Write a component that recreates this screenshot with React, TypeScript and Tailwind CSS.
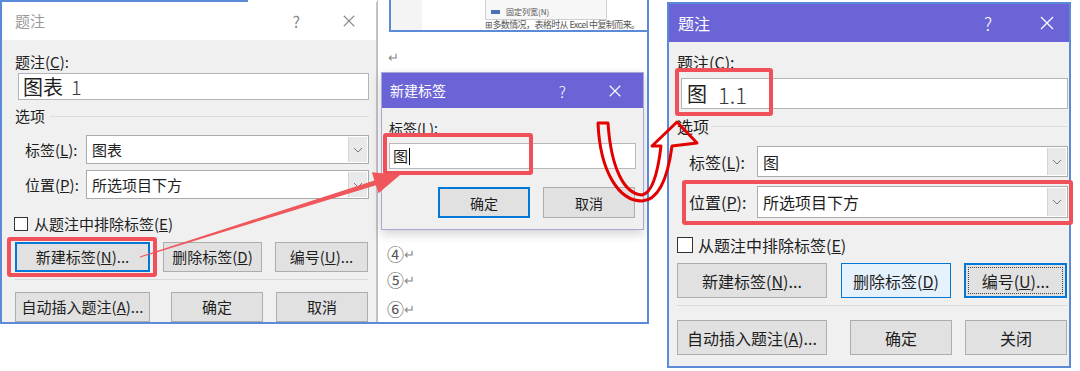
import React from "react";

const cjk = "font-['Noto_Sans_CJK_SC',sans-serif]";

function CloseIcon({ size = 16, color = "#ffffff" }: { size?: number; color?: string }) {
  return (
    <svg width={size} height={size} viewBox="0 0 16 16">
      <path d="M2 2 L14 14 M14 2 L2 14" stroke={color} strokeWidth="1.3" />
    </svg>
  );
}

function Chevron() {
  return (
    <svg width="10" height="6" viewBox="0 0 10 6">
      <path d="M1 1 L5 5 L9 1" fill="none" stroke="#777" strokeWidth="1" />
    </svg>
  );
}

function Select({ text, className }: { text: string; className: string }) {
  return (
    <div className={`flex items-stretch border border-[#ababab] bg-white ${className}`}>
      <div className="flex flex-1 items-center pl-[5px]">{text}</div>
      <div className="m-px flex w-[19px] items-center justify-center border-l border-[#d4d4d4] bg-[#e9e9e9]">
        <Chevron />
      </div>
    </div>
  );
}

const btnStyles = {
  normal: "border border-[#adadad] bg-[#e1e1e1]",
  focus: "border-2 border-[#0078d7] bg-[#e1e1e1]",
  hover: "border border-[#0078d7] bg-[#e5f1fb]",
};

function Btn({
  children,
  className,
  variant = "normal",
}: {
  children: React.ReactNode;
  className: string;
  variant?: "normal" | "focus" | "hover";
}) {
  return (
    <div className={`flex shrink-0 items-center justify-center ${btnStyles[variant]} ${className}`}>
      {children}
    </div>
  );
}

function LeftDialog() {
  return (
    <div className="flex w-[375px] shrink-0 flex-col">
      <div className="h-[2px] w-[246px] shrink-0 bg-[#5b8bd8]" />
      <div className="flex flex-1 flex-col border-r border-[#c4c4c4]">
        <div className="flex h-[38px] shrink-0 items-center bg-white pl-[13px] pr-[20px]">
          <span className="text-[15px] text-[#9a9a9a]">题注</span>
          <span className="ml-auto text-[16px] text-[#8a8a8a]">?</span>
          <span className="ml-[42px] flex">
            <CloseIcon size={14} color="#8a8a8a" />
          </span>
        </div>
        <div className="flex-1 bg-[#f0f0f0] pl-[13px] pt-[12px] text-[15px] leading-[20px] text-[#1e1e1e]">
          <div className="h-[20px]">
            题注(<u>C</u>):
          </div>
          <div className="ml-[3px] mt-[1px] flex h-[27px] w-[351px] items-center border border-[#b4b4b4] bg-white pl-[4px] text-[20px] leading-[24px]">
            <span>图表</span>
            <span className="ml-[8px] font-light text-[#3a3a3a]">1</span>
          </div>
          <div className="mt-[6px] flex h-[20px] w-[354px] items-center">
            <span>选项</span>
            <div className="ml-[5px] h-px flex-1 bg-[#dcdcdc]" />
          </div>
          <div className="mt-[9px] flex items-center">
            <span className="w-[71px] pl-[10px]">
              标签(<u>L</u>):
            </span>
            <Select text="图表" className="h-[29px] w-[283px]" />
          </div>
          <div className="mt-[6px] flex items-center">
            <span className="w-[71px] pl-[10px]">
              位置(<u>P</u>):
            </span>
            <Select text="所选项目下方" className="h-[29px] w-[283px]" />
          </div>
          <div className="-ml-px mt-[18px] flex h-[14px] items-center">
            <div className="h-[14px] w-[14px] border border-[#333] bg-white" />
            <span className="ml-[6px]">
              从题注中排除标签(<u>E</u>)
            </span>
          </div>
          <div className="mt-[11px] flex">
            <Btn variant="focus" className="h-[30px] w-[135px]">
              新建标签(<u>N</u>)...
            </Btn>
            <Btn className="ml-[13px] h-[30px] w-[99px]">
              删除标签(<u>D</u>)
            </Btn>
            <Btn className="ml-[13px] h-[30px] w-[93px]">
              编号(<u>U</u>)...
            </Btn>
          </div>
          <div className="mt-[7px] h-px w-[353px] bg-[#dadada]" />
          <div className="mt-[12px] flex">
            <Btn className="h-[30px] w-[135px]">
              自动插入题注(<u>A</u>)...
            </Btn>
            <Btn className="ml-[21px] h-[30px] w-[92px]">确定</Btn>
            <Btn className="ml-[13px] h-[30px] w-[92px]">取消</Btn>
          </div>
        </div>
      </div>
    </div>
  );
}

function NewLabelDialog() {
  return (
    <div className="ml-[3px] mt-[7px] flex w-[263px] shrink-0 flex-col border border-[#aaa6d6] shadow-[0_4px_10px_rgba(0,0,0,0.18)]">
      <div className="flex h-[35px] items-center bg-[#6b64d6] pl-[8px] pr-[21px] text-white">
        <span className="text-[14px]">新建标签</span>
        <span className="ml-auto text-[16px] font-light">?</span>
        <span className="ml-[42px] flex">
          <CloseIcon size={14} />
        </span>
      </div>
      <div className="bg-[#f0f0f0] pb-[11px] pl-[7px] pt-[11px] text-[14px] leading-[18px] text-[#1e1e1e]">
        <div>
          标签(<u>L</u>):
        </div>
        <div className="mt-[6px] flex h-[26px] w-[247px] items-center border border-[#b9b9b9] bg-white pl-[3px] text-[15px]">
          <span>图</span>
          <span className="ml-px h-[17px] w-px bg-black" />
        </div>
        <div className="mt-[18px] flex">
          <Btn variant="focus" className="ml-[49px] h-[31px] w-[92px]">
            确定
          </Btn>
          <Btn className="ml-[13px] h-[31px] w-[92px]">取消</Btn>
        </div>
      </div>
    </div>
  );
}

function DocumentArea() {
  return (
    <div className="flex flex-1 flex-col border-l border-[#c0c0c0] bg-white">
      <div className="relative ml-[11px] flex h-[32px] shrink-0 border-b-2 border-l-2 border-[#5b8bd8]">
        <div className="w-[31px] bg-[#f4f4f4]" />
        <div className="absolute left-[94px] top-[-2px] flex h-[22px] w-[122px] items-end border border-[#cfcfcf] bg-[#f7f7f7] pb-[2px] pl-[5px] text-[8px] leading-[10px] text-[#555]">
          <span className="mb-[3px] h-[4px] w-[9px] bg-[#4f6fb5]" />
          <span className="ml-[6px]">固定列宽(N)</span>
        </div>
        <div className="absolute bottom-0 left-[94px] whitespace-nowrap text-[9px] leading-[10px] tracking-[-0.6px] text-[#555]">
          ⊞多数情况，表格时从 Excel 中复制而来。
        </div>
      </div>
      <div className="ml-[10px] mt-[17px] h-[16px] shrink-0 text-[13px] leading-[16px] text-[#888]">↵</div>
      <NewLabelDialog />
      <div className="ml-[9px] shrink-0 text-[17px] leading-[20px] text-[#555]">
        <div className="mt-[14px] flex h-[20px] items-center">
          ④<span className="text-[13px] text-[#888]">↵</span>
        </div>
        <div className="mt-[6px] flex h-[20px] items-center">
          ⑤<span className="text-[13px] text-[#888]">↵</span>
        </div>
        <div className="mt-[9px] flex h-[20px] items-center">
          ⑥<span className="text-[13px] text-[#888]">↵</span>
        </div>
      </div>
    </div>
  );
}

function RightDialog() {
  return (
    <div className="ml-[18px] mt-[2px] flex h-[366px] w-[404px] shrink-0 flex-col border-2 border-[#5b8bd8]">
      <div className="flex h-[38px] shrink-0 items-center bg-[#6b64d6] pl-[9px] pr-[14px] text-white">
        <span className="text-[16px]">题注</span>
        <span className="ml-auto text-[18px] font-light">?</span>
        <span className="ml-[47px] flex">
          <CloseIcon size={16} />
        </span>
      </div>
      <div className="flex-1 bg-[#f0f0f0] pl-[8px] pt-[10px] text-[16px] leading-[20px] text-[#1e1e1e]">
        <div className="h-[20px]">
          题注(<u>C</u>):
        </div>
        <div className="ml-[4px] mt-[6px] flex h-[31px] w-[387px] items-center border border-[#b4b4b4] bg-white pl-[5px] text-[20px] leading-[24px]">
          <span>图</span>
          <span className="ml-[11px] text-[22px] font-light text-[#3a3a3a]">1.1</span>
        </div>
        <div className="mt-[7px] flex h-[20px] w-[391px] items-center">
          <span>选项</span>
          <div className="ml-[2px] h-px flex-1 bg-[#dcdcdc]" />
        </div>
        <div className="mt-[10px] flex items-center">
          <span className="w-[80px] pl-[12px]">
            标签(<u>L</u>):
          </span>
          <Select text="图" className="h-[31px] w-[311px]" />
        </div>
        <div className="mt-[9px] flex items-center">
          <span className="w-[80px] pl-[12px]">
            位置(<u>P</u>):
          </span>
          <Select text="所选项目下方" className="h-[32px] w-[311px]" />
        </div>
        <div className="mt-[19px] flex h-[16px] items-center">
          <div className="h-[16px] w-[16px] border border-[#333] bg-white" />
          <span className="ml-[5px]">
            从题注中排除标签(<u>E</u>)
          </span>
        </div>
        <div className="mt-[10px] flex">
          <Btn className="h-[35px] w-[150px]">
            新建标签(<u>N</u>)...
          </Btn>
          <Btn variant="hover" className="ml-[14px] h-[35px] w-[110px]">
            删除标签(<u>D</u>)
          </Btn>
          <Btn variant="focus" className="ml-[13px] h-[35px] w-[103px] p-[2px]">
            <div className="flex h-full w-full items-center justify-center border border-dotted border-[#444]">
              编号(<u>U</u>)...
            </div>
          </Btn>
        </div>
        <div className="mt-[7px] h-px w-[390px] bg-[#dadada]" />
        <div className="mt-[14px] flex">
          <Btn className="h-[35px] w-[150px]">
            自动插入题注(<u>A</u>)...
          </Btn>
          <Btn className="ml-[23px] h-[35px] w-[102px]">确定</Btn>
          <Btn className="ml-[13px] h-[35px] w-[102px]">关闭</Btn>
        </div>
      </div>
    </div>
  );
}

function Arrows() {
  return (
    <svg className="pointer-events-none absolute left-0 top-0" width="1080" height="371" viewBox="0 0 1080 371">
      <polygon
        points="140.2,257.5 139.8,256.5 374.4,180.4 371.9,172.3 400,175 378.5,193.3 376,185.2"
        fill="#f0575c"
      />
      <path
        d="M598 123 L608 123 C611 168 624 194 642 195 C652 193 658 172 661 146 L652 146 L677 122 L697 143 L672 146 C668 176 660 200 642 201 C619 201 600 172 598 123 Z"
        fill="none"
        stroke="#e30000"
        strokeWidth="3"
        strokeLinejoin="round"
      />
    </svg>
  );
}

export default function App() {
  return (
    <div className={`relative flex h-[371px] w-[1080px] items-start overflow-hidden bg-white ${cjk}`}>
      <div className="flex h-[324px] w-[649px] shrink-0 overflow-hidden border-b-2 border-l-2 border-r-2 border-[#5b8bd8]">
        <LeftDialog />
        <DocumentArea />
      </div>
      <RightDialog />

      <div className="absolute left-[7px] top-[237px] h-[40px] w-[150px] rounded-[3px] border-4 border-[#f0505a]" />
      <div className="absolute left-[383px] top-[133px] h-[42px] w-[150px] rounded-[3px] border-4 border-[#f0505a]" />
      <div className="absolute left-[675px] top-[68px] h-[48px] w-[98px] rounded-[3px] border-4 border-[#f0505a]" />
      <div className="absolute left-[682px] top-[180px] h-[45px] w-[391px] rounded-[3px] border-4 border-[#f0505a]" />
      <Arrows />
    </div>
  );
}
